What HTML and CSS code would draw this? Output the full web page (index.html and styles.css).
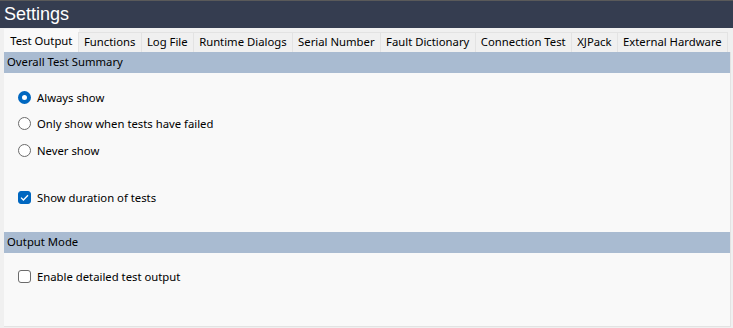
FILE: index.html
```html
<!DOCTYPE html>
<html lang="en">

<head>
  <meta charset="UTF-8">
  <title>Settings</title>
  <link rel="stylesheet" href="styles.css">
</head>

<body>
  <div class="titlebar">Settings</div>

  <div class="tabs">
    <div class="tab active">Test Output</div>
    <div class="tab">Functions</div>
    <div class="tab">Log File</div>
    <div class="tab">Runtime Dialogs</div>
    <div class="tab">Serial Number</div>
    <div class="tab">Fault Dictionary</div>
    <div class="tab">Connection Test</div>
    <div class="tab">XJPack</div>
    <div class="tab">External Hardware</div>
  </div>

  <div class="panel">
    <div class="section">Overall Test Summary</div>
    <div class="options">
      <label class="option"><span class="radio checked"></span>Always show</label>
      <label class="option"><span class="radio"></span>Only show when tests have failed</label>
      <label class="option"><span class="radio"></span>Never show</label>
      <label class="option spaced"><span class="check checked">
        <svg width="9" height="7" viewBox="0 0 9 7"><path d="M1 3.6 L3.4 6 L8 1.2" fill="none" stroke="#fff" stroke-width="1.3"/></svg>
      </span>Show duration of tests</label>
    </div>

    <div class="section">Output Mode</div>
    <div class="options">
      <label class="option"><span class="check"></span>Enable detailed test output</label>
    </div>
  </div>
</body>

</html>
```

FILE: styles.css
```css
body {
  margin: 0;
  width: 733px;
  height: 328px;
  overflow: hidden;
  background-color: #f0f0f0;
  font-family: "Noto Sans", sans-serif;
  font-size: 11.3px;
  color: #000;
}

.titlebar {
  height: 27px;
  border-top: 1px solid #5a5a5a;
  background-color: #353d50;
  color: #fff;
  font-family: "Liberation Sans", Arial, sans-serif;
  font-size: 18px;
  line-height: 26px;
  padding-left: 4px;
}

.tabs {
  display: flex;
  align-items: flex-end;
  height: 23px;
  padding: 0 4px;
  margin-top: 1px;
}

.tab {
  white-space: nowrap;
  height: 19px;
  line-height: 18px;
  padding: 0 5.25px;
  margin-right: -1px;
  border: 1px solid #e3e3e3;
  border-bottom: none;
  background-color: #f0f0f0;
}

.tab.active {
  height: 22px;
  line-height: 21px;
  border-color: #f9f9f9;
  background-color: #f9f9f9;
}

.panel {
  margin: 0 2px 0 4px;
  height: 274px;
  background-color: #f9f9f9;
  border-right: 1px solid #e3e3e3;
  border-bottom: 1px solid #e3e3e3;
}

.section {
  height: 21px;
  line-height: 20px;
  padding-left: 3px;
  background-color: #a9bbd1;
}

.options {
  display: flex;
  flex-direction: column;
  padding: 14px 0 24px 14px;
  gap: 6.5px;
}

.option {
  display: flex;
  align-items: center;
  height: 20px;
}

.option.spaced {
  margin-top: 21px;
}

.radio,
.check {
  box-sizing: border-box;
  width: 13px;
  height: 13px;
  margin-right: 6px;
  background-color: #fff;
  border: 1px solid #6b6b6b;
}

.radio {
  border-radius: 50%;
}

.radio.checked {
  border: 4px solid #0067c0;
}

.check {
  border-radius: 3px;
  display: flex;
  align-items: center;
  justify-content: center;
}

.check.checked {
  background-color: #0067c0;
  border-color: #0067c0;
}
```
